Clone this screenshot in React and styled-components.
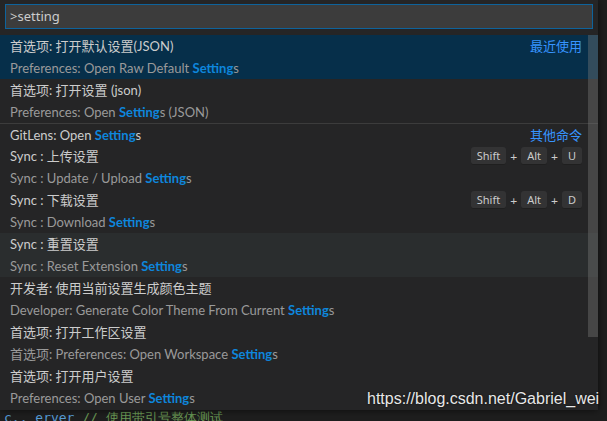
import styled, { createGlobalStyle } from "styled-components";

const Global = createGlobalStyle`
  html, body {
    margin: 0;
    padding: 0;
    background: #1e1e1e;
    overflow: hidden;
  }
  body {
    font-family: Lato, "Noto Sans CJK SC", sans-serif;
  }
`;

const Screen = styled.div`
  position: relative;
  width: 607px;
  height: 421px;
  background: #1e1e1e;
  overflow: hidden;
`;

const Widget = styled.div`
  position: relative;
  width: 598px;
  height: 410px;
  background: #252526;
  box-shadow: 0 0 8px rgba(0, 0, 0, 0.6);
  overflow: hidden;
`;

const InputWrap = styled.div`
  padding: 4px 5px 6px 5px;
`;

const Input = styled.div`
  box-sizing: border-box;
  width: 588px;
  height: 25px;
  border: 1px solid #0e639c;
  background: #3c3c3c;
  color: #cccccc;
  font-family: "Noto Sans", "Noto Sans CJK SC", sans-serif;
  font-size: 13px;
  line-height: 23px;
  padding-left: 4px;
`;

const List = styled.div`
  display: flex;
  flex-direction: column;
`;

const Row = styled.div`
  display: flex;
  align-items: flex-start;
  justify-content: space-between;
  padding: 0 16px 0 10px;
  height: ${(p) => (p.$single ? "22px" : "44px")};
  background: ${(p) =>
    p.$selected ? "#062f4a" : p.$hover ? "#2a2d2e" : "transparent"};
  border-top: ${(p) => (p.$separator ? "1px solid #3c3c3c" : "none")};
  box-sizing: border-box;
`;

const Texts = styled.div`
  display: flex;
  flex-direction: column;
`;

const Label = styled.div`
  font-size: 13px;
  line-height: 22px;
  color: #cccccc;
  white-space: nowrap;
`;

const Desc = styled.div`
  font-size: 13px;
  line-height: 22px;
  color: #9a9a9a;
  white-space: nowrap;
`;

const Hl = styled.span`
  color: #0e86dc;
  font-weight: 700;
`;

const Group = styled.div`
  font-size: 13px;
  line-height: 22px;
  color: #3794ff;
  white-space: nowrap;
`;

const Keys = styled.div`
  display: flex;
  align-items: center;
  gap: 4px;
  height: 22px;
  color: #cccccc;
  font-size: 12px;
`;

const Key = styled.span`
  display: inline-block;
  height: 17px;
  line-height: 17px;
  padding: 0 6px;
  border-radius: 3px;
  background: #333334;
  border-bottom: 1px solid #1f1f1f;
  font-family: "Noto Sans", sans-serif;
  font-size: 11px;
  color: #cccccc;
`;

const Scrollbar = styled.div`
  position: absolute;
  right: 0;
  top: 35px;
  width: 10px;
  height: 302px;
  background: rgba(121, 121, 121, 0.4);
`;

const Editor = styled.div`
  height: 11px;
  padding-left: 4px;
  font-family: "DejaVu Sans Mono", monospace;
  font-size: 13px;
  line-height: 11px;
  color: #6a9955;
  white-space: nowrap;
  overflow: hidden;
  padding-top: 2px;
`;

const Watermark = styled.div`
  position: absolute;
  left: 367px;
  top: 390px;
  font-family: "Liberation Sans", Arial, sans-serif;
  font-size: 16px;
  color: #e8e8e8;
  text-shadow: 0 0 2px rgba(0, 0, 0, 0.8);
  white-space: nowrap;
`;

function S({ rest = "s" }) {
  return (
    <>
      <Hl>Setting</Hl>
      {rest}
    </>
  );
}

function KeyCombo({ last }) {
  return (
    <Keys>
      <Key>Shift</Key>+<Key>Alt</Key>+<Key>{last}</Key>
    </Keys>
  );
}

export default function App() {
  return (
    <Screen>
      <Global />
      <Widget>
        <InputWrap>
          <Input>&gt;setting</Input>
        </InputWrap>
        <List>
          <Row $selected>
            <Texts>
              <Label>首选项: 打开默认设置(JSON)</Label>
              <Desc>
                Preferences: Open Raw Default <S />
              </Desc>
            </Texts>
            <Group>最近使用</Group>
          </Row>
          <Row>
            <Texts>
              <Label>首选项: 打开设置 (json)</Label>
              <Desc>
                Preferences: Open <S rest="s (JSON)" />
              </Desc>
            </Texts>
          </Row>
          <Row $single $separator>
            <Label>
              GitLens: Open <S />
            </Label>
            <Group>其他命令</Group>
          </Row>
          <Row>
            <Texts>
              <Label>Sync : 上传设置</Label>
              <Desc>
                Sync : Update / Upload <S />
              </Desc>
            </Texts>
            <KeyCombo last="U" />
          </Row>
          <Row>
            <Texts>
              <Label>Sync : 下载设置</Label>
              <Desc>
                Sync : Download <S />
              </Desc>
            </Texts>
            <KeyCombo last="D" />
          </Row>
          <Row $hover>
            <Texts>
              <Label>Sync : 重置设置</Label>
              <Desc>
                Sync : Reset Extension <S />
              </Desc>
            </Texts>
          </Row>
          <Row>
            <Texts>
              <Label>开发者: 使用当前设置生成颜色主题</Label>
              <Desc>
                Developer: Generate Color Theme From Current <S />
              </Desc>
            </Texts>
          </Row>
          <Row>
            <Texts>
              <Label>首选项: 打开工作区设置</Label>
              <Desc>
                首选项: Preferences: Open Workspace <S />
              </Desc>
            </Texts>
          </Row>
          <Row>
            <Texts>
              <Label>首选项: 打开用户设置</Label>
              <Desc>
                Preferences: Open User <S />
              </Desc>
            </Texts>
          </Row>
        </List>
        <Scrollbar />
      </Widget>
      <Editor>
        <span style={{ color: "#569cd6" }}>c.. erver</span>{"    "}// 使用带引号整体测试
      </Editor>
      <Watermark>https://blog.csdn.net/Gabriel_wei</Watermark>
    </Screen>
  );
}
